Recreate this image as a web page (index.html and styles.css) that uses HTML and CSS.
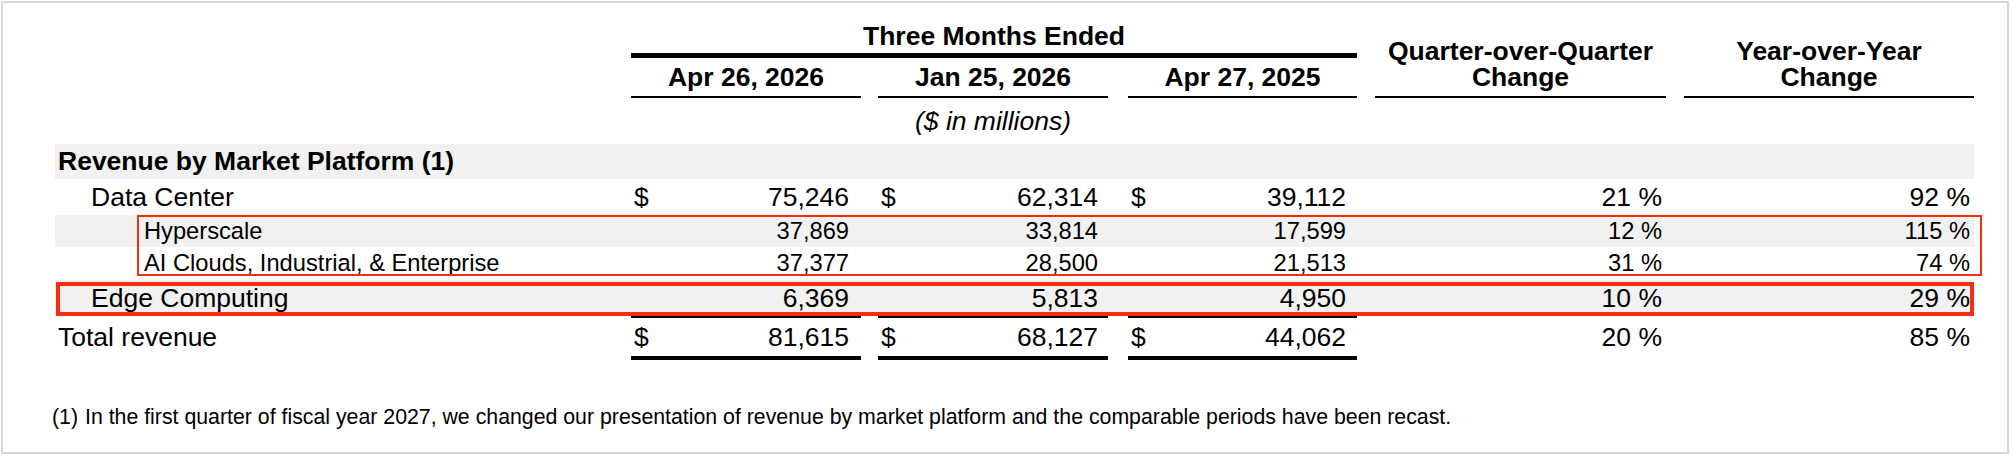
FILE: index.html
```html
<!DOCTYPE html>
<html lang="en">
<head>
<meta charset="utf-8">
<title>Revenue by Market Platform</title>
<link rel="stylesheet" href="styles.css">
</head>
<body>
<div class="frame">
  <div class="table">
    <div class="head">
      <div class="lab"></div>
      <div class="group">
        <div class="group-title">Three Months Ended</div>
        <div class="dates">
          <div class="dh c1">Apr 26, 2026</div>
          <div class="dh c2">Jan 25, 2026</div>
          <div class="dh c3">Apr 27, 2025</div>
        </div>
      </div>
      <div class="ch q">Quarter-over-Quarter<br>Change</div>
      <div class="ch y">Year-over-Year<br>Change</div>
    </div>

    <div class="units">
      <div class="lab"></div>
      <div class="c c1"></div>
      <div class="c c2 u">($ in millions)</div>
    </div>

    <div class="row section shade">
      <div class="lab">Revenue by Market Platform (1)</div>
    </div>

    <div class="row main">
      <div class="lab ind1">Data Center</div>
      <div class="c c1 m"><span class="d">$</span><span>75,246</span></div>
      <div class="c c2 m"><span class="d">$</span><span>62,314</span></div>
      <div class="c c3 m"><span class="d">$</span><span>39,112</span></div>
      <div class="c q p">21 %</div>
      <div class="c y p">92 %</div>
    </div>

    <div class="row sub hs shade">
      <div class="lab ind2">Hyperscale</div>
      <div class="c c1 m"><span>37,869</span></div>
      <div class="c c2 m"><span>33,814</span></div>
      <div class="c c3 m"><span>17,599</span></div>
      <div class="c q p">12 %</div>
      <div class="c y p">115 %</div>
    </div>

    <div class="row sub ai">
      <div class="lab ind2">AI Clouds, Industrial, &amp; Enterprise</div>
      <div class="c c1 m"><span>37,377</span></div>
      <div class="c c2 m"><span>28,500</span></div>
      <div class="c c3 m"><span>21,513</span></div>
      <div class="c q p">31 %</div>
      <div class="c y p">74 %</div>
    </div>

    <div class="row main shade">
      <div class="lab ind1">Edge Computing</div>
      <div class="c c1 m"><span>6,369</span></div>
      <div class="c c2 m"><span>5,813</span></div>
      <div class="c c3 m"><span>4,950</span></div>
      <div class="c q p">10 %</div>
      <div class="c y p">29 %</div>
    </div>

    <div class="row total">
      <div class="lab">Total revenue</div>
      <div class="c c1 m"><span class="d">$</span><span>81,615</span></div>
      <div class="c c2 m"><span class="d">$</span><span>68,127</span></div>
      <div class="c c3 m"><span class="d">$</span><span>44,062</span></div>
      <div class="c q p">20 %</div>
      <div class="c y p">85 %</div>
    </div>

    <div class="redbox box1"></div>
    <div class="redbox box2"></div>
  </div>

  <p class="note"><span class="fn">(1)</span><span>In the first quarter of fiscal year 2027, we changed our presentation of revenue by market platform and the comparable periods have been recast.</span></p>
</div>
</body>
</html>
```

FILE: styles.css
```css
* { box-sizing: border-box; }

html, body {
  margin: 0;
  padding: 0;
  background: #ffffff;
}

body {
  padding: 1px 0 0 1px;
  font-family: "Liberation Sans", Arial, Helvetica, sans-serif;
  color: #000000;
}

.frame {
  width: 2008px;
  height: 453px;
  border: 2px solid #d6d6d6;
  background: #ffffff;
}

.table {
  position: relative;
  width: 1919px;
  margin-left: 52px;
  padding-top: 18px;
  font-size: 26.5px;
}

/* column widths and gaps */
.lab { width: 576px; flex: none; }
.c1 { width: 230px; flex: none; }
.c2 { width: 230px; flex: none; margin-left: 17px; }
.c3 { width: 229px; flex: none; margin-left: 20px; }
.q { width: 291px; flex: none; margin-left: 18px; }
.y { width: 290px; flex: none; margin-left: 18px; }

/* header */
.head {
  display: flex;
  align-items: flex-end;
  font-weight: bold;
}

.group {
  width: 726px;
  flex: none;
}

.group-title {
  text-align: center;
  line-height: 30px;
  padding-bottom: 2px;
  border-bottom: 5px solid #000;
}

.dates {
  display: flex;
}

.dh {
  text-align: center;
  line-height: 30px;
  padding: 4px 0;
  border-bottom: 2px solid #000;
}

.ch {
  text-align: center;
  line-height: 26px;
  padding-bottom: 6px;
  border-bottom: 2px solid #000;
}

/* units row */
.units {
  display: flex;
  height: 46px;
  line-height: 46px;
}

.u {
  text-align: center;
  font-style: italic;
}

/* body rows */
.row {
  display: flex;
}

.shade {
  background: #f0f1f0;
}

.section {
  height: 35px;
  line-height: 35px;
  font-weight: bold;
}

.section .lab {
  width: auto;
  padding-left: 3px;
}

.main {
  height: 36px;
  line-height: 36px;
}

.sub {
  font-size: 23.7px;
}

.hs {
  height: 32px;
  line-height: 32px;
}

.ai {
  height: 33px;
  line-height: 33px;
}

.lab { padding-left: 3px; white-space: nowrap; }
.ind1 { padding-left: 36px; }
.ind2 { padding-left: 89px; }

.m {
  display: flex;
  justify-content: flex-end;
}

.m .d {
  margin-right: auto;
  padding-left: 3px;
}

.c1.m { padding-right: 12px; }
.c2.m { padding-right: 10px; }
.c3.m { padding-right: 11px; }

.p {
  text-align: right;
  padding-right: 4px;
}

.total {
  height: 44px;
  line-height: 38px;
}

.total .c,
.total .lab {
  border-top: 2px solid transparent;
  border-bottom: 4px solid transparent;
}

.total .m {
  border-top-color: #000;
  border-bottom-color: #000;
}

/* annotation overlays */
.redbox {
  position: absolute;
  pointer-events: none;
}

.box1 {
  left: 82px;
  top: 212px;
  width: 1845px;
  height: 61px;
  border: 2px solid #f62d0e;
}

.box2 {
  left: 1px;
  top: 279px;
  width: 1918px;
  height: 34px;
  border: 4px solid #f62d0e;
}

/* footnote */
.note {
  margin: 45px 0 0 49px;
  font-size: 21.3px;
  line-height: 24px;
  display: flex;
  white-space: nowrap;
}

.fn {
  width: 33px;
  flex: none;
}
```
